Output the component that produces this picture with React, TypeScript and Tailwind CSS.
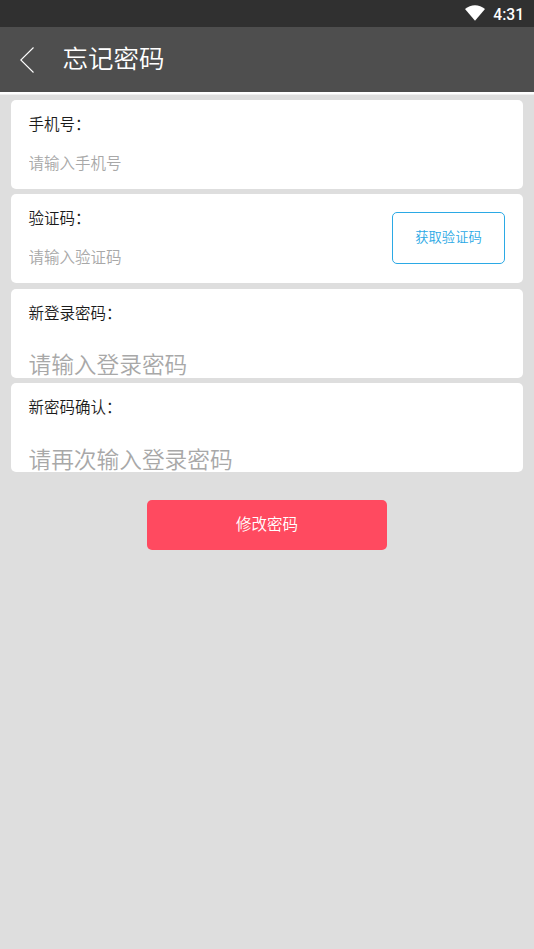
type FieldProps = {
  label: string;
  placeholder: string;
  type?: string;
  large?: boolean;
  action?: string;
};

function Field({ label, placeholder, type = "text", large = false, action }: FieldProps) {
  return (
    <div className="flex h-[89px] items-start justify-between overflow-hidden rounded-[5px] bg-white pl-[17.5px] pr-[18px]">
      <label className="flex min-w-0 flex-1 flex-col">
        <span className="mt-[13px] h-6 whitespace-nowrap text-[15.5px] leading-6 text-[#1b1b1b]">{label}</span>
        <input
          type={type}
          placeholder={placeholder}
          className={
            large
              ? "mt-[22.6px] h-9 w-full shrink-0 bg-transparent text-[22.7px] leading-9 outline-none placeholder:text-[#a8a8a8]"
              : "mt-[15px] h-6 w-full bg-transparent text-[15.5px] leading-6 outline-none placeholder:text-[#a8a8a8]"
          }
        />
      </label>
      {action && (
        <button className="mt-[18px] h-[52px] w-[113px] rounded-[5px] border border-[#2ba9e5] pb-px text-[13.3px] text-[#2ba9e5]">
          {action}
        </button>
      )}
    </div>
  );
}

export default function App() {
  return (
    <div className="flex h-[949px] w-[534px] flex-col overflow-hidden bg-[#dedede] font-[Roboto,'Noto_Sans_CJK_SC',sans-serif] font-[350]">
      {/* Status bar */}
      <div className="flex h-[27px] shrink-0 items-center justify-end bg-[#303030] pr-[10px] text-white">
        <svg width="20" height="16" viewBox="0 0 20 16" className="mr-2 mb-px" fill="currentColor">
          <path d="M0 4C5.8-1.1 14.2-1.1 20 4L10 15.7z" />
        </svg>
        <span className="mt-[3px] text-[15.6px] font-medium leading-5">4:31</span>
      </div>

      <header className="flex h-[65px] shrink-0 items-center bg-[#4e4e4e] pl-5 text-white">
        <svg width="15" height="28" viewBox="0 0 15 28" fill="none" stroke="currentColor" strokeWidth="1.1">
          <path d="M13.5 1.5L.8 14l12.7 12.5" />
        </svg>
        <h1 className="ml-[27.5px] pb-[2px] text-[25.5px] leading-9">忘记密码</h1>
      </header>
      <div className="h-[2px] shrink-0 bg-white" />
      <div className="h-px shrink-0 bg-[#f0f0f0]" />

      <main className="px-[11px] pt-[4.6px]">
        <form className="flex flex-col gap-[5.5px]" onSubmit={(e) => e.preventDefault()}>
          <Field label="手机号：" placeholder="请输入手机号" type="tel" />
          <Field label="验证码：" placeholder="请输入验证码" action="获取验证码" />
          <Field label="新登录密码：" placeholder="请输入登录密码" type="password" large />
          <Field label="新密码确认：" placeholder="请再次输入登录密码" type="password" large />
          <button className="mx-auto mt-[22.4px] h-[50px] w-[240px] rounded-[5px] bg-[#ff4a60] pt-[2px] text-[15.5px] text-white">
            修改密码
          </button>
        </form>
      </main>
    </div>
  );
}
